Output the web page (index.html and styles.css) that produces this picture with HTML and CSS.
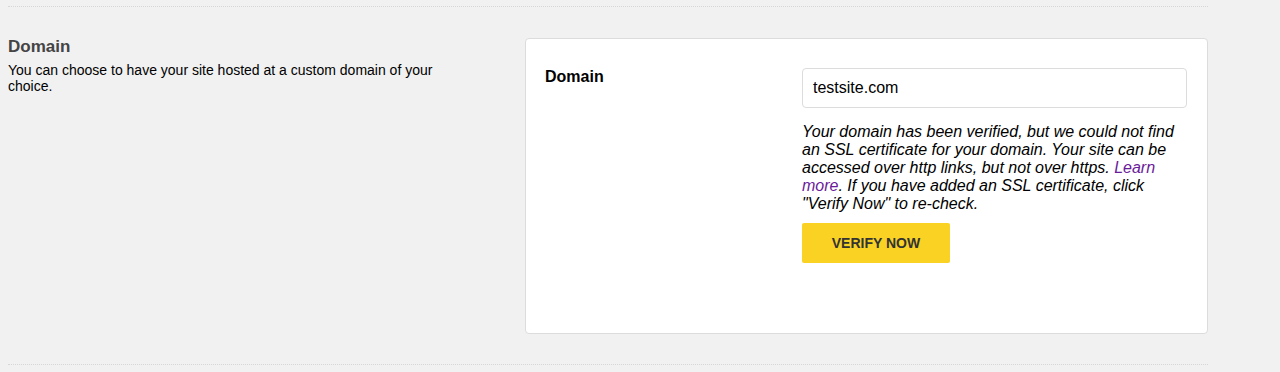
FILE: index.html
```html
<!DOCTYPE html>
<html>
<head>
<meta charset="utf-8">
<link rel="stylesheet" href="styles.css">
</head>
<body>
<section class="section">
  <div class="intro">
    <h2 class="intro-title">Domain</h2>
    <p class="intro-text">You can choose to have your site hosted at a custom domain of your choice.</p>
  </div>
  <div class="card">
    <div class="field-label">Domain</div>
    <div class="field-body">
      <input class="text-input" type="text" value="testsite.com">
      <p class="help">Your domain has been verified, but we could not find an SSL certificate for your domain. Your site can be accessed over http links, but not over https. <a class="help-link" href="#">Learn more</a>. If you have added an SSL certificate, click "Verify Now" to re-check.</p>
      <button class="btn" type="button">VERIFY NOW</button>
    </div>
  </div>
</section>
</body>
</html>
```

FILE: styles.css
```css
html, body {
  margin: 0;
  padding: 0;
  background: #f1f1f1;
  font-family: "Liberation Sans", Arial, sans-serif;
  color: #000;
}

.section {
  width: 1200px;
  margin: 6px 0 0 8px;
  border-top: 1px dotted #d6d6d6;
  border-bottom: 1px dotted #d6d6d6;
  padding: 31px 0 30px;
  display: flex;
  box-sizing: border-box;
}

.intro {
  width: 450px;
  margin-right: 67px;
  margin-top: -1px;
}

.intro-title {
  margin: 0;
  font-size: 17px;
  line-height: 20px;
  font-weight: bold;
  color: #444;
}

.intro-text {
  margin: 5px 0 0;
  font-size: 14px;
  line-height: 16px;
}

.card {
  flex: 1;
  background: #fff;
  border: 1px solid #dcdcdc;
  border-radius: 4px;
  padding: 29px 20px 70px 19px;
  display: flex;
}

.field-label {
  width: 257px;
  flex: none;
  font-size: 16px;
  font-weight: bold;
  line-height: 18px;
}

.field-body {
  flex: 1;
}

.text-input {
  display: block;
  box-sizing: border-box;
  width: 100%;
  height: 40px;
  margin: 0;
  padding: 0 10px;
  border: 1px solid #dcdcdc;
  border-radius: 4px;
  font-family: "Liberation Sans", Arial, sans-serif;
  font-size: 16px;
  color: #000;
  background: #fff;
}

.help {
  margin: 15px 0 0;
  font-size: 16px;
  line-height: 18px;
  font-style: italic;
}

.help-link {
  color: #6a1b9a;
  text-decoration: none;
}

.btn {
  display: block;
  margin-top: 10px;
  width: 148px;
  height: 40px;
  border: none;
  border-radius: 2px;
  background: #f9d224;
  color: #333;
  font-family: "Liberation Sans", Arial, sans-serif;
  font-size: 14px;
  font-weight: bold;
  padding: 0;
}
```
